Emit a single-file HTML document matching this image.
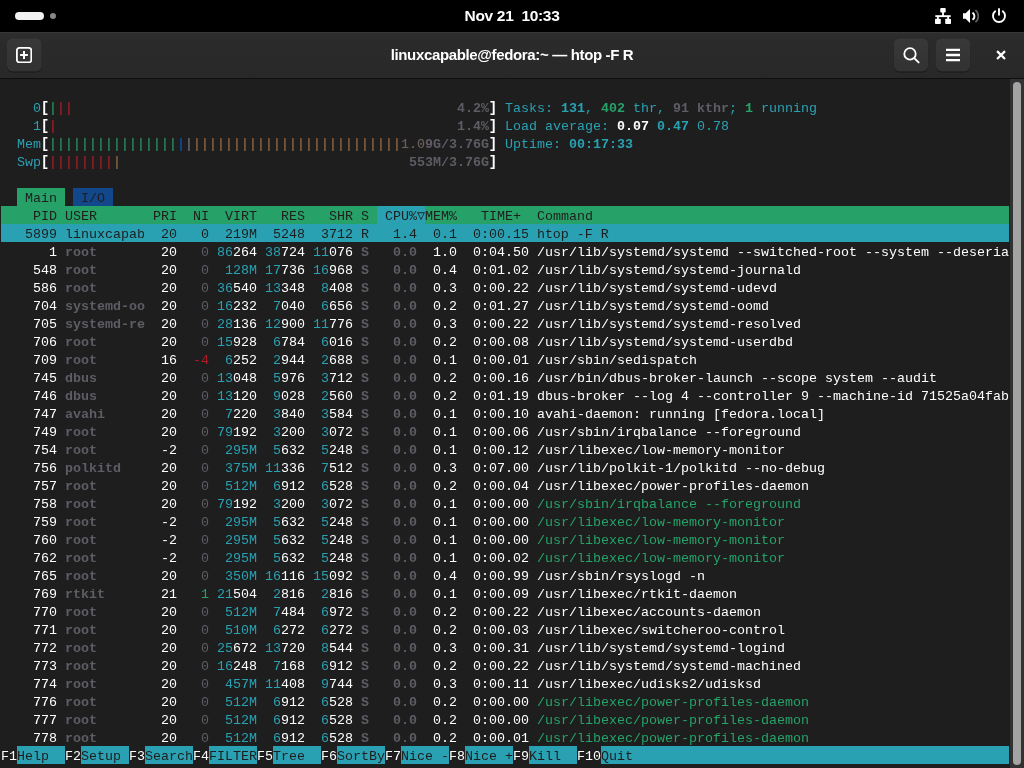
<!DOCTYPE html>
<html lang="en"><head><meta charset="utf-8"><title>linuxcapable@fedora:~ — htop -F R</title>
<style>
html,body{margin:0;padding:0;background:#1e1e1e;}
body{width:1024px;height:768px;overflow:hidden;position:relative;font-family:"Liberation Sans",sans-serif;}
#top{position:absolute;left:0;top:0;width:1024px;height:32px;background:#000;}
#pill{position:absolute;left:15px;top:12px;width:29px;height:8px;border-radius:4px;background:#f2f2f2;}
#dot{position:absolute;left:50px;top:13px;width:6px;height:6px;border-radius:3px;background:#868686;}
#clock{will-change:transform;position:absolute;left:412px;top:0;width:200px;height:32px;line-height:31px;text-align:center;color:#fff;font-weight:bold;font-size:15.5px;letter-spacing:-0.32px;white-space:pre;}
#hb{position:absolute;left:0;top:32px;width:1024px;height:46px;background:linear-gradient(#2e2e2e,#2b2b2b 12%,#282828);border-top:1px solid #363636;border-bottom:1px solid #0e0e0e;box-sizing:content-box;height:45px;}
#title{will-change:transform;position:absolute;left:312px;top:32px;width:400px;height:46px;line-height:45px;text-align:center;color:#fff;font-weight:bold;font-size:15px;letter-spacing:-0.35px;white-space:pre;}
.btn{position:absolute;top:39px;width:34px;height:32px;border-radius:5px;background:linear-gradient(#373737,#313131);box-shadow:0 1px 0 #1a1a1a, inset 0 1px 0 #3d3d3d;}
.ico{position:absolute;}
#term{position:absolute;left:0;top:79px;width:1010px;height:689px;background:#1e1e1e;}
#sbt{position:absolute;left:1010px;top:79px;width:14px;height:689px;background:#323232;}
#sb{position:absolute;left:1013px;top:82px;width:8px;height:683px;border-radius:4px;background:#a4a4a2;}
.r{will-change:transform;position:absolute;left:1px;height:18px;line-height:18px;white-space:pre;font-family:"Liberation Mono",monospace;font-size:13.3333px;color:#fff;width:1010px;}
.r span{display:inline-block;height:18px;line-height:22px;vertical-align:top;overflow:hidden;white-space:pre;}
.w{color:#fff}
.W{color:#fff;font-weight:bold}
.c{color:#2aa1b3}
.C{color:#2aa1b3;font-weight:bold}
.g{color:#26a269}
.G{color:#26a269;font-weight:bold}
.rd{color:#b01d29}
.b{color:#12488b}
.B{color:#12488b;font-weight:bold}
.bg{color:#26a269}
.br{color:#c01c28}
.by{color:#a2734c}
.y{color:#a2734c}
.k{color:#5e5c64}
.r span.bar{font-size:14px;letter-spacing:-0.4014px;height:17px;text-indent:-0.2px;}
.r span.brk{font-size:14px;letter-spacing:-0.4014px;line-height:20px;text-indent:-0.2px;}
.ko{color:#645e62;text-shadow:0 0 1px rgba(162,115,76,.5)}
.K{color:#5e5c64;font-weight:bold}
.hg{background:#26a269;color:#1e1e1e}
.hb{background:#12488b;color:#1e1e1e}
.hc{background:#2aa1b3;color:#1e1e1e}
</style></head><body>
<div id="top"><div id="pill"></div><div id="dot"></div><div id="clock">Nov 21  10:33</div></div>
<div id="hb"></div>
<svg class="ico" style="left:0;top:32px" width="1024" height="47" viewBox="0 0 1024 47"><defs><linearGradient id="bg1" x1="0" y1="0" x2="0" y2="1"><stop offset="0" stop-color="#383838"/><stop offset="1" stop-color="#323232"/></linearGradient></defs><g fill="#181818"><rect x="7" y="7.4" width="34.6" height="33" rx="5.5"/><rect x="893.8" y="7.4" width="34.3" height="33" rx="5.5"/><rect x="936" y="7.4" width="34.2" height="33" rx="5.5"/></g><g fill="url(#bg1)"><rect x="7" y="6.6" width="34.6" height="32.8" rx="5.5"/><rect x="893.8" y="6.6" width="34.3" height="32.8" rx="5.5"/><rect x="936" y="6.6" width="34.2" height="32.8" rx="5.5"/></g></svg>
<div id="title">linuxcapable@fedora:~ — htop -F R</div>
<div id="term"></div>
<div id="sbt"></div><div id="sb"></div>

<!-- new tab icon -->
<svg class="ico" style="left:16px;top:47px" width="16" height="16" viewBox="0 0 16 16"><rect x="0.9" y="0.9" width="14.4" height="14.4" rx="2.4" fill="none" stroke="#fff" stroke-width="1.8"/><path d="M8 4.1v7.8M4.1 8h7.8" stroke="#fff" stroke-width="2" fill="none"/></svg>
<!-- search icon -->
<svg class="ico" style="left:902px;top:46px" width="20" height="20" viewBox="0 0 20 20"><circle cx="8" cy="7.9" r="5.7" fill="none" stroke="#fff" stroke-width="1.8"/><path d="M12.2 12.1l4.4 4.3" stroke="#fff" stroke-width="2" stroke-linecap="round"/></svg>
<!-- menu icon -->
<svg class="ico" style="left:945px;top:47px" width="16" height="16" viewBox="0 0 16 16"><path d="M1 2.8h14M1 8h14M1 13.2h14" stroke="#fff" stroke-width="2.3"/></svg>
<!-- close icon -->
<svg class="ico" style="left:996px;top:50px" width="10" height="10" viewBox="0 0 10 10"><path d="M1.1 1.1l7.9 7.9M9 1.1l-7.9 7.9" stroke="#fff" stroke-width="2.2" stroke-linecap="butt"/></svg>
<!-- network icon -->
<svg class="ico" style="left:935px;top:8px" width="16" height="16" viewBox="0 0 16 16"><g fill="#fff"><rect x="5.3" y="0" width="5.4" height="4.6" rx="0.8"/><rect x="7.1" y="4" width="1.8" height="4"/><rect x="0.3" y="7.2" width="15.4" height="1.9"/><rect x="2" y="8" width="1.8" height="3.5"/><rect x="12.2" y="8" width="1.8" height="3.5"/><rect x="0" y="10.8" width="5.8" height="5.2" rx="0.8"/><rect x="10.2" y="10.8" width="5.8" height="5.2" rx="0.8"/></g></svg>
<!-- volume icon -->
<svg class="ico" style="left:963px;top:8px" width="17" height="16" viewBox="0 0 17 16"><path d="M0 5.2h2.6L7 1v14L2.6 10.8H0z" fill="#fff"/><path d="M9.5 4.6a4.3 4.3 0 0 1 0 7.2" fill="none" stroke="#fff" stroke-width="1.9"/><path d="M12.4 2.2a7.66 7.66 0 0 1 0 12" fill="none" stroke="#606060" stroke-width="1.7"/></svg>
<!-- power icon -->
<svg class="ico" style="left:991px;top:7px" width="16" height="17" viewBox="0 0 16 17"><path d="M4.22 4.34A6 6 0 1 0 11.78 4.34" fill="none" stroke="#fff" stroke-width="1.9" stroke-linecap="round"/><path d="M8 2V7.8" stroke="#fff" stroke-width="1.9" stroke-linecap="round"/></svg>

<div class="r" style="top:98px"><span class="c" style="width:40px">    0</span><span class="W brk" style="width:8px">[</span><span class="bg bar" style="width:8px">|</span><span class="br bar" style="width:16px">||</span><span class="w" style="width:384px">                                                </span><span class="K" style="width:32px">4.2%</span><span class="W brk" style="width:8px">]</span><span class="w" style="width:8px"> </span><span class="c" style="width:56px">Tasks: </span><span class="C" style="width:24px">131</span><span class="c" style="width:16px">, </span><span class="G" style="width:24px">402</span><span class="c" style="width:48px"> thr, </span><span class="K" style="width:16px">91</span><span class="K" style="width:40px"> kthr</span><span class="c" style="width:16px">; </span><span class="G" style="width:8px">1</span><span class="c" style="width:64px"> running</span></div>
<div class="r" style="top:116px"><span class="c" style="width:40px">    1</span><span class="W brk" style="width:8px">[</span><span class="br bar" style="width:8px">|</span><span class="w" style="width:400px">                                                  </span><span class="K" style="width:32px">1.4%</span><span class="W brk" style="width:8px">]</span><span class="w" style="width:8px"> </span><span class="c" style="width:112px">Load average: </span><span class="W" style="width:32px">0.07</span><span class="w" style="width:8px"> </span><span class="C" style="width:32px">0.47</span><span class="w" style="width:8px"> </span><span class="c" style="width:32px">0.78</span></div>
<div class="r" style="top:134px"><span class="c" style="width:40px">  Mem</span><span class="W brk" style="width:8px">[</span><span class="bg bar" style="width:128px">||||||||||||||||</span><span class="B bar" style="width:8px">|</span><span class="K bar" style="width:8px">|</span><span class="by bar" style="width:208px">||||||||||||||||||||||||||</span><span class="ko" style="width:24px">1.0</span><span class="K" style="width:64px">9G/3.76G</span><span class="W brk" style="width:8px">]</span><span class="w" style="width:8px"> </span><span class="c" style="width:64px">Uptime: </span><span class="C" style="width:64px">00:17:33</span></div>
<div class="r" style="top:152px"><span class="c" style="width:40px">  Swp</span><span class="W brk" style="width:8px">[</span><span class="br bar" style="width:64px">||||||||</span><span class="by bar" style="width:8px">|</span><span class="w" style="width:288px">                                    </span><span class="K" style="width:80px">553M/3.76G</span><span class="W brk" style="width:8px">]</span></div>
<div class="r" style="top:188px"><span class="w" style="width:16px">  </span><span class="hg" style="width:48px"> Main </span><span class="w" style="width:8px"> </span><span class="hb" style="width:40px"> I/O </span></div>
<div class="r" style="top:206px"><span class="hg" style="width:376px">    PID USER       PRI  NI  VIRT   RES   SHR S </span><span class="hc" style="width:48px"> CPU%▽</span><span class="hg" style="width:584px">MEM%   TIME+  Command                                                    </span></div>
<div class="r" style="top:224px"><span class="hc" style="width:1008px">   5899 linuxcapab  20   0  219M  5248  3712 R   1.4  0.1  0:00.15 htop -F R                                                  </span></div>
<div class="r" style="top:242px"><span class="w" style="width:64px">      1 </span><span class="K" style="width:88px">root       </span><span class="w" style="width:32px"> 20 </span><span class="k" style="width:32px">  0 </span><span class="c" style="width:16px">86</span><span class="w" style="width:24px">264</span><span class="w" style="width:8px"> </span><span class="c" style="width:16px">38</span><span class="w" style="width:24px">724</span><span class="w" style="width:8px"> </span><span class="c" style="width:16px">11</span><span class="w" style="width:24px">076</span><span class="w" style="width:8px"> </span><span class="K" style="width:16px">S </span><span class="K" style="width:48px">  0.0 </span><span class="w" style="width:40px"> 1.0 </span><span class="w" style="width:72px"> 0:04.50 </span><span class="w" style="width:472px">/usr/lib/systemd/systemd --switched-root --system --deseria</span></div>
<div class="r" style="top:260px"><span class="w" style="width:64px">    548 </span><span class="K" style="width:88px">root       </span><span class="w" style="width:32px"> 20 </span><span class="k" style="width:32px">  0 </span><span class="w" style="width:8px"> </span><span class="c" style="width:32px">128M</span><span class="w" style="width:8px"> </span><span class="c" style="width:16px">17</span><span class="w" style="width:24px">736</span><span class="w" style="width:8px"> </span><span class="c" style="width:16px">16</span><span class="w" style="width:24px">968</span><span class="w" style="width:8px"> </span><span class="K" style="width:16px">S </span><span class="K" style="width:48px">  0.0 </span><span class="w" style="width:40px"> 0.4 </span><span class="w" style="width:72px"> 0:01.02 </span><span class="w" style="width:264px">/usr/lib/systemd/systemd-journald</span></div>
<div class="r" style="top:278px"><span class="w" style="width:64px">    586 </span><span class="K" style="width:88px">root       </span><span class="w" style="width:32px"> 20 </span><span class="k" style="width:32px">  0 </span><span class="c" style="width:16px">36</span><span class="w" style="width:24px">540</span><span class="w" style="width:8px"> </span><span class="c" style="width:16px">13</span><span class="w" style="width:24px">348</span><span class="w" style="width:8px"> </span><span class="w" style="width:8px"> </span><span class="c" style="width:8px">8</span><span class="w" style="width:24px">408</span><span class="w" style="width:8px"> </span><span class="K" style="width:16px">S </span><span class="K" style="width:48px">  0.0 </span><span class="w" style="width:40px"> 0.3 </span><span class="w" style="width:72px"> 0:00.22 </span><span class="w" style="width:240px">/usr/lib/systemd/systemd-udevd</span></div>
<div class="r" style="top:296px"><span class="w" style="width:64px">    704 </span><span class="K" style="width:88px">systemd-oo </span><span class="w" style="width:32px"> 20 </span><span class="k" style="width:32px">  0 </span><span class="c" style="width:16px">16</span><span class="w" style="width:24px">232</span><span class="w" style="width:8px"> </span><span class="w" style="width:8px"> </span><span class="c" style="width:8px">7</span><span class="w" style="width:24px">040</span><span class="w" style="width:8px"> </span><span class="w" style="width:8px"> </span><span class="c" style="width:8px">6</span><span class="w" style="width:24px">656</span><span class="w" style="width:8px"> </span><span class="K" style="width:16px">S </span><span class="K" style="width:48px">  0.0 </span><span class="w" style="width:40px"> 0.2 </span><span class="w" style="width:72px"> 0:01.27 </span><span class="w" style="width:232px">/usr/lib/systemd/systemd-oomd</span></div>
<div class="r" style="top:314px"><span class="w" style="width:64px">    705 </span><span class="K" style="width:88px">systemd-re </span><span class="w" style="width:32px"> 20 </span><span class="k" style="width:32px">  0 </span><span class="c" style="width:16px">28</span><span class="w" style="width:24px">136</span><span class="w" style="width:8px"> </span><span class="c" style="width:16px">12</span><span class="w" style="width:24px">900</span><span class="w" style="width:8px"> </span><span class="c" style="width:16px">11</span><span class="w" style="width:24px">776</span><span class="w" style="width:8px"> </span><span class="K" style="width:16px">S </span><span class="K" style="width:48px">  0.0 </span><span class="w" style="width:40px"> 0.3 </span><span class="w" style="width:72px"> 0:00.22 </span><span class="w" style="width:264px">/usr/lib/systemd/systemd-resolved</span></div>
<div class="r" style="top:332px"><span class="w" style="width:64px">    706 </span><span class="K" style="width:88px">root       </span><span class="w" style="width:32px"> 20 </span><span class="k" style="width:32px">  0 </span><span class="c" style="width:16px">15</span><span class="w" style="width:24px">928</span><span class="w" style="width:8px"> </span><span class="w" style="width:8px"> </span><span class="c" style="width:8px">6</span><span class="w" style="width:24px">784</span><span class="w" style="width:8px"> </span><span class="w" style="width:8px"> </span><span class="c" style="width:8px">6</span><span class="w" style="width:24px">016</span><span class="w" style="width:8px"> </span><span class="K" style="width:16px">S </span><span class="K" style="width:48px">  0.0 </span><span class="w" style="width:40px"> 0.2 </span><span class="w" style="width:72px"> 0:00.08 </span><span class="w" style="width:256px">/usr/lib/systemd/systemd-userdbd</span></div>
<div class="r" style="top:350px"><span class="w" style="width:64px">    709 </span><span class="K" style="width:88px">root       </span><span class="w" style="width:32px"> 16 </span><span class="rd" style="width:32px"> -4 </span><span class="w" style="width:8px"> </span><span class="c" style="width:8px">6</span><span class="w" style="width:24px">252</span><span class="w" style="width:8px"> </span><span class="w" style="width:8px"> </span><span class="c" style="width:8px">2</span><span class="w" style="width:24px">944</span><span class="w" style="width:8px"> </span><span class="w" style="width:8px"> </span><span class="c" style="width:8px">2</span><span class="w" style="width:24px">688</span><span class="w" style="width:8px"> </span><span class="K" style="width:16px">S </span><span class="K" style="width:48px">  0.0 </span><span class="w" style="width:40px"> 0.1 </span><span class="w" style="width:72px"> 0:00.01 </span><span class="w" style="width:160px">/usr/sbin/sedispatch</span></div>
<div class="r" style="top:368px"><span class="w" style="width:64px">    745 </span><span class="K" style="width:88px">dbus       </span><span class="w" style="width:32px"> 20 </span><span class="k" style="width:32px">  0 </span><span class="c" style="width:16px">13</span><span class="w" style="width:24px">048</span><span class="w" style="width:8px"> </span><span class="w" style="width:8px"> </span><span class="c" style="width:8px">5</span><span class="w" style="width:24px">976</span><span class="w" style="width:8px"> </span><span class="w" style="width:8px"> </span><span class="c" style="width:8px">3</span><span class="w" style="width:24px">712</span><span class="w" style="width:8px"> </span><span class="K" style="width:16px">S </span><span class="K" style="width:48px">  0.0 </span><span class="w" style="width:40px"> 0.2 </span><span class="w" style="width:72px"> 0:00.16 </span><span class="w" style="width:400px">/usr/bin/dbus-broker-launch --scope system --audit</span></div>
<div class="r" style="top:386px"><span class="w" style="width:64px">    746 </span><span class="K" style="width:88px">dbus       </span><span class="w" style="width:32px"> 20 </span><span class="k" style="width:32px">  0 </span><span class="c" style="width:16px">13</span><span class="w" style="width:24px">120</span><span class="w" style="width:8px"> </span><span class="w" style="width:8px"> </span><span class="c" style="width:8px">9</span><span class="w" style="width:24px">028</span><span class="w" style="width:8px"> </span><span class="w" style="width:8px"> </span><span class="c" style="width:8px">2</span><span class="w" style="width:24px">560</span><span class="w" style="width:8px"> </span><span class="K" style="width:16px">S </span><span class="K" style="width:48px">  0.0 </span><span class="w" style="width:40px"> 0.2 </span><span class="w" style="width:72px"> 0:01.19 </span><span class="w" style="width:472px">dbus-broker --log 4 --controller 9 --machine-id 71525a04fab</span></div>
<div class="r" style="top:404px"><span class="w" style="width:64px">    747 </span><span class="K" style="width:88px">avahi      </span><span class="w" style="width:32px"> 20 </span><span class="k" style="width:32px">  0 </span><span class="w" style="width:8px"> </span><span class="c" style="width:8px">7</span><span class="w" style="width:24px">220</span><span class="w" style="width:8px"> </span><span class="w" style="width:8px"> </span><span class="c" style="width:8px">3</span><span class="w" style="width:24px">840</span><span class="w" style="width:8px"> </span><span class="w" style="width:8px"> </span><span class="c" style="width:8px">3</span><span class="w" style="width:24px">584</span><span class="w" style="width:8px"> </span><span class="K" style="width:16px">S </span><span class="K" style="width:48px">  0.0 </span><span class="w" style="width:40px"> 0.1 </span><span class="w" style="width:72px"> 0:00.10 </span><span class="w" style="width:288px">avahi-daemon: running [fedora.local]</span></div>
<div class="r" style="top:422px"><span class="w" style="width:64px">    749 </span><span class="K" style="width:88px">root       </span><span class="w" style="width:32px"> 20 </span><span class="k" style="width:32px">  0 </span><span class="c" style="width:16px">79</span><span class="w" style="width:24px">192</span><span class="w" style="width:8px"> </span><span class="w" style="width:8px"> </span><span class="c" style="width:8px">3</span><span class="w" style="width:24px">200</span><span class="w" style="width:8px"> </span><span class="w" style="width:8px"> </span><span class="c" style="width:8px">3</span><span class="w" style="width:24px">072</span><span class="w" style="width:8px"> </span><span class="K" style="width:16px">S </span><span class="K" style="width:48px">  0.0 </span><span class="w" style="width:40px"> 0.1 </span><span class="w" style="width:72px"> 0:00.06 </span><span class="w" style="width:264px">/usr/sbin/irqbalance --foreground</span></div>
<div class="r" style="top:440px"><span class="w" style="width:64px">    754 </span><span class="K" style="width:88px">root       </span><span class="w" style="width:32px"> -2 </span><span class="k" style="width:32px">  0 </span><span class="w" style="width:8px"> </span><span class="c" style="width:32px">295M</span><span class="w" style="width:8px"> </span><span class="w" style="width:8px"> </span><span class="c" style="width:8px">5</span><span class="w" style="width:24px">632</span><span class="w" style="width:8px"> </span><span class="w" style="width:8px"> </span><span class="c" style="width:8px">5</span><span class="w" style="width:24px">248</span><span class="w" style="width:8px"> </span><span class="K" style="width:16px">S </span><span class="K" style="width:48px">  0.0 </span><span class="w" style="width:40px"> 0.1 </span><span class="w" style="width:72px"> 0:00.12 </span><span class="w" style="width:248px">/usr/libexec/low-memory-monitor</span></div>
<div class="r" style="top:458px"><span class="w" style="width:64px">    756 </span><span class="K" style="width:88px">polkitd    </span><span class="w" style="width:32px"> 20 </span><span class="k" style="width:32px">  0 </span><span class="w" style="width:8px"> </span><span class="c" style="width:32px">375M</span><span class="w" style="width:8px"> </span><span class="c" style="width:16px">11</span><span class="w" style="width:24px">336</span><span class="w" style="width:8px"> </span><span class="w" style="width:8px"> </span><span class="c" style="width:8px">7</span><span class="w" style="width:24px">512</span><span class="w" style="width:8px"> </span><span class="K" style="width:16px">S </span><span class="K" style="width:48px">  0.0 </span><span class="w" style="width:40px"> 0.3 </span><span class="w" style="width:72px"> 0:07.00 </span><span class="w" style="width:288px">/usr/lib/polkit-1/polkitd --no-debug</span></div>
<div class="r" style="top:476px"><span class="w" style="width:64px">    757 </span><span class="K" style="width:88px">root       </span><span class="w" style="width:32px"> 20 </span><span class="k" style="width:32px">  0 </span><span class="w" style="width:8px"> </span><span class="c" style="width:32px">512M</span><span class="w" style="width:8px"> </span><span class="w" style="width:8px"> </span><span class="c" style="width:8px">6</span><span class="w" style="width:24px">912</span><span class="w" style="width:8px"> </span><span class="w" style="width:8px"> </span><span class="c" style="width:8px">6</span><span class="w" style="width:24px">528</span><span class="w" style="width:8px"> </span><span class="K" style="width:16px">S </span><span class="K" style="width:48px">  0.0 </span><span class="w" style="width:40px"> 0.2 </span><span class="w" style="width:72px"> 0:00.04 </span><span class="w" style="width:272px">/usr/libexec/power-profiles-daemon</span></div>
<div class="r" style="top:494px"><span class="w" style="width:64px">    758 </span><span class="K" style="width:88px">root       </span><span class="w" style="width:32px"> 20 </span><span class="k" style="width:32px">  0 </span><span class="c" style="width:16px">79</span><span class="w" style="width:24px">192</span><span class="w" style="width:8px"> </span><span class="w" style="width:8px"> </span><span class="c" style="width:8px">3</span><span class="w" style="width:24px">200</span><span class="w" style="width:8px"> </span><span class="w" style="width:8px"> </span><span class="c" style="width:8px">3</span><span class="w" style="width:24px">072</span><span class="w" style="width:8px"> </span><span class="K" style="width:16px">S </span><span class="K" style="width:48px">  0.0 </span><span class="w" style="width:40px"> 0.1 </span><span class="w" style="width:72px"> 0:00.00 </span><span class="g" style="width:264px">/usr/sbin/irqbalance --foreground</span></div>
<div class="r" style="top:512px"><span class="w" style="width:64px">    759 </span><span class="K" style="width:88px">root       </span><span class="w" style="width:32px"> -2 </span><span class="k" style="width:32px">  0 </span><span class="w" style="width:8px"> </span><span class="c" style="width:32px">295M</span><span class="w" style="width:8px"> </span><span class="w" style="width:8px"> </span><span class="c" style="width:8px">5</span><span class="w" style="width:24px">632</span><span class="w" style="width:8px"> </span><span class="w" style="width:8px"> </span><span class="c" style="width:8px">5</span><span class="w" style="width:24px">248</span><span class="w" style="width:8px"> </span><span class="K" style="width:16px">S </span><span class="K" style="width:48px">  0.0 </span><span class="w" style="width:40px"> 0.1 </span><span class="w" style="width:72px"> 0:00.00 </span><span class="g" style="width:248px">/usr/libexec/low-memory-monitor</span></div>
<div class="r" style="top:530px"><span class="w" style="width:64px">    760 </span><span class="K" style="width:88px">root       </span><span class="w" style="width:32px"> -2 </span><span class="k" style="width:32px">  0 </span><span class="w" style="width:8px"> </span><span class="c" style="width:32px">295M</span><span class="w" style="width:8px"> </span><span class="w" style="width:8px"> </span><span class="c" style="width:8px">5</span><span class="w" style="width:24px">632</span><span class="w" style="width:8px"> </span><span class="w" style="width:8px"> </span><span class="c" style="width:8px">5</span><span class="w" style="width:24px">248</span><span class="w" style="width:8px"> </span><span class="K" style="width:16px">S </span><span class="K" style="width:48px">  0.0 </span><span class="w" style="width:40px"> 0.1 </span><span class="w" style="width:72px"> 0:00.00 </span><span class="g" style="width:248px">/usr/libexec/low-memory-monitor</span></div>
<div class="r" style="top:548px"><span class="w" style="width:64px">    762 </span><span class="K" style="width:88px">root       </span><span class="w" style="width:32px"> -2 </span><span class="k" style="width:32px">  0 </span><span class="w" style="width:8px"> </span><span class="c" style="width:32px">295M</span><span class="w" style="width:8px"> </span><span class="w" style="width:8px"> </span><span class="c" style="width:8px">5</span><span class="w" style="width:24px">632</span><span class="w" style="width:8px"> </span><span class="w" style="width:8px"> </span><span class="c" style="width:8px">5</span><span class="w" style="width:24px">248</span><span class="w" style="width:8px"> </span><span class="K" style="width:16px">S </span><span class="K" style="width:48px">  0.0 </span><span class="w" style="width:40px"> 0.1 </span><span class="w" style="width:72px"> 0:00.02 </span><span class="g" style="width:248px">/usr/libexec/low-memory-monitor</span></div>
<div class="r" style="top:566px"><span class="w" style="width:64px">    765 </span><span class="K" style="width:88px">root       </span><span class="w" style="width:32px"> 20 </span><span class="k" style="width:32px">  0 </span><span class="w" style="width:8px"> </span><span class="c" style="width:32px">350M</span><span class="w" style="width:8px"> </span><span class="c" style="width:16px">16</span><span class="w" style="width:24px">116</span><span class="w" style="width:8px"> </span><span class="c" style="width:16px">15</span><span class="w" style="width:24px">092</span><span class="w" style="width:8px"> </span><span class="K" style="width:16px">S </span><span class="K" style="width:48px">  0.0 </span><span class="w" style="width:40px"> 0.4 </span><span class="w" style="width:72px"> 0:00.99 </span><span class="w" style="width:168px">/usr/sbin/rsyslogd -n</span></div>
<div class="r" style="top:584px"><span class="w" style="width:64px">    769 </span><span class="K" style="width:88px">rtkit      </span><span class="w" style="width:32px"> 21 </span><span class="g" style="width:32px">  1 </span><span class="c" style="width:16px">21</span><span class="w" style="width:24px">504</span><span class="w" style="width:8px"> </span><span class="w" style="width:8px"> </span><span class="c" style="width:8px">2</span><span class="w" style="width:24px">816</span><span class="w" style="width:8px"> </span><span class="w" style="width:8px"> </span><span class="c" style="width:8px">2</span><span class="w" style="width:24px">816</span><span class="w" style="width:8px"> </span><span class="K" style="width:16px">S </span><span class="K" style="width:48px">  0.0 </span><span class="w" style="width:40px"> 0.1 </span><span class="w" style="width:72px"> 0:00.09 </span><span class="w" style="width:200px">/usr/libexec/rtkit-daemon</span></div>
<div class="r" style="top:602px"><span class="w" style="width:64px">    770 </span><span class="K" style="width:88px">root       </span><span class="w" style="width:32px"> 20 </span><span class="k" style="width:32px">  0 </span><span class="w" style="width:8px"> </span><span class="c" style="width:32px">512M</span><span class="w" style="width:8px"> </span><span class="w" style="width:8px"> </span><span class="c" style="width:8px">7</span><span class="w" style="width:24px">484</span><span class="w" style="width:8px"> </span><span class="w" style="width:8px"> </span><span class="c" style="width:8px">6</span><span class="w" style="width:24px">972</span><span class="w" style="width:8px"> </span><span class="K" style="width:16px">S </span><span class="K" style="width:48px">  0.0 </span><span class="w" style="width:40px"> 0.2 </span><span class="w" style="width:72px"> 0:00.22 </span><span class="w" style="width:224px">/usr/libexec/accounts-daemon</span></div>
<div class="r" style="top:620px"><span class="w" style="width:64px">    771 </span><span class="K" style="width:88px">root       </span><span class="w" style="width:32px"> 20 </span><span class="k" style="width:32px">  0 </span><span class="w" style="width:8px"> </span><span class="c" style="width:32px">510M</span><span class="w" style="width:8px"> </span><span class="w" style="width:8px"> </span><span class="c" style="width:8px">6</span><span class="w" style="width:24px">272</span><span class="w" style="width:8px"> </span><span class="w" style="width:8px"> </span><span class="c" style="width:8px">6</span><span class="w" style="width:24px">272</span><span class="w" style="width:8px"> </span><span class="K" style="width:16px">S </span><span class="K" style="width:48px">  0.0 </span><span class="w" style="width:40px"> 0.2 </span><span class="w" style="width:72px"> 0:00.03 </span><span class="w" style="width:248px">/usr/libexec/switcheroo-control</span></div>
<div class="r" style="top:638px"><span class="w" style="width:64px">    772 </span><span class="K" style="width:88px">root       </span><span class="w" style="width:32px"> 20 </span><span class="k" style="width:32px">  0 </span><span class="c" style="width:16px">25</span><span class="w" style="width:24px">672</span><span class="w" style="width:8px"> </span><span class="c" style="width:16px">13</span><span class="w" style="width:24px">720</span><span class="w" style="width:8px"> </span><span class="w" style="width:8px"> </span><span class="c" style="width:8px">8</span><span class="w" style="width:24px">544</span><span class="w" style="width:8px"> </span><span class="K" style="width:16px">S </span><span class="K" style="width:48px">  0.0 </span><span class="w" style="width:40px"> 0.3 </span><span class="w" style="width:72px"> 0:00.31 </span><span class="w" style="width:248px">/usr/lib/systemd/systemd-logind</span></div>
<div class="r" style="top:656px"><span class="w" style="width:64px">    773 </span><span class="K" style="width:88px">root       </span><span class="w" style="width:32px"> 20 </span><span class="k" style="width:32px">  0 </span><span class="c" style="width:16px">16</span><span class="w" style="width:24px">248</span><span class="w" style="width:8px"> </span><span class="w" style="width:8px"> </span><span class="c" style="width:8px">7</span><span class="w" style="width:24px">168</span><span class="w" style="width:8px"> </span><span class="w" style="width:8px"> </span><span class="c" style="width:8px">6</span><span class="w" style="width:24px">912</span><span class="w" style="width:8px"> </span><span class="K" style="width:16px">S </span><span class="K" style="width:48px">  0.0 </span><span class="w" style="width:40px"> 0.2 </span><span class="w" style="width:72px"> 0:00.22 </span><span class="w" style="width:264px">/usr/lib/systemd/systemd-machined</span></div>
<div class="r" style="top:674px"><span class="w" style="width:64px">    774 </span><span class="K" style="width:88px">root       </span><span class="w" style="width:32px"> 20 </span><span class="k" style="width:32px">  0 </span><span class="w" style="width:8px"> </span><span class="c" style="width:32px">457M</span><span class="w" style="width:8px"> </span><span class="c" style="width:16px">11</span><span class="w" style="width:24px">408</span><span class="w" style="width:8px"> </span><span class="w" style="width:8px"> </span><span class="c" style="width:8px">9</span><span class="w" style="width:24px">744</span><span class="w" style="width:8px"> </span><span class="K" style="width:16px">S </span><span class="K" style="width:48px">  0.0 </span><span class="w" style="width:40px"> 0.3 </span><span class="w" style="width:72px"> 0:00.11 </span><span class="w" style="width:224px">/usr/libexec/udisks2/udisksd</span></div>
<div class="r" style="top:692px"><span class="w" style="width:64px">    776 </span><span class="K" style="width:88px">root       </span><span class="w" style="width:32px"> 20 </span><span class="k" style="width:32px">  0 </span><span class="w" style="width:8px"> </span><span class="c" style="width:32px">512M</span><span class="w" style="width:8px"> </span><span class="w" style="width:8px"> </span><span class="c" style="width:8px">6</span><span class="w" style="width:24px">912</span><span class="w" style="width:8px"> </span><span class="w" style="width:8px"> </span><span class="c" style="width:8px">6</span><span class="w" style="width:24px">528</span><span class="w" style="width:8px"> </span><span class="K" style="width:16px">S </span><span class="K" style="width:48px">  0.0 </span><span class="w" style="width:40px"> 0.2 </span><span class="w" style="width:72px"> 0:00.00 </span><span class="g" style="width:272px">/usr/libexec/power-profiles-daemon</span></div>
<div class="r" style="top:710px"><span class="w" style="width:64px">    777 </span><span class="K" style="width:88px">root       </span><span class="w" style="width:32px"> 20 </span><span class="k" style="width:32px">  0 </span><span class="w" style="width:8px"> </span><span class="c" style="width:32px">512M</span><span class="w" style="width:8px"> </span><span class="w" style="width:8px"> </span><span class="c" style="width:8px">6</span><span class="w" style="width:24px">912</span><span class="w" style="width:8px"> </span><span class="w" style="width:8px"> </span><span class="c" style="width:8px">6</span><span class="w" style="width:24px">528</span><span class="w" style="width:8px"> </span><span class="K" style="width:16px">S </span><span class="K" style="width:48px">  0.0 </span><span class="w" style="width:40px"> 0.2 </span><span class="w" style="width:72px"> 0:00.00 </span><span class="g" style="width:272px">/usr/libexec/power-profiles-daemon</span></div>
<div class="r" style="top:728px"><span class="w" style="width:64px">    778 </span><span class="K" style="width:88px">root       </span><span class="w" style="width:32px"> 20 </span><span class="k" style="width:32px">  0 </span><span class="w" style="width:8px"> </span><span class="c" style="width:32px">512M</span><span class="w" style="width:8px"> </span><span class="w" style="width:8px"> </span><span class="c" style="width:8px">6</span><span class="w" style="width:24px">912</span><span class="w" style="width:8px"> </span><span class="w" style="width:8px"> </span><span class="c" style="width:8px">6</span><span class="w" style="width:24px">528</span><span class="w" style="width:8px"> </span><span class="K" style="width:16px">S </span><span class="K" style="width:48px">  0.0 </span><span class="w" style="width:40px"> 0.2 </span><span class="w" style="width:72px"> 0:00.01 </span><span class="g" style="width:272px">/usr/libexec/power-profiles-daemon</span></div>
<div class="r" style="top:746px"><span class="w" style="width:16px">F1</span><span class="hc" style="width:48px">Help  </span><span class="w" style="width:16px">F2</span><span class="hc" style="width:48px">Setup </span><span class="w" style="width:16px">F3</span><span class="hc" style="width:48px">Search</span><span class="w" style="width:16px">F4</span><span class="hc" style="width:48px">FILTER</span><span class="w" style="width:16px">F5</span><span class="hc" style="width:48px">Tree  </span><span class="w" style="width:16px">F6</span><span class="hc" style="width:48px">SortBy</span><span class="w" style="width:16px">F7</span><span class="hc" style="width:48px">Nice -</span><span class="w" style="width:16px">F8</span><span class="hc" style="width:48px">Nice +</span><span class="w" style="width:16px">F9</span><span class="hc" style="width:48px">Kill  </span><span class="w" style="width:24px">F10</span><span class="hc" style="width:408px">Quit                                               </span></div>
</body></html>
